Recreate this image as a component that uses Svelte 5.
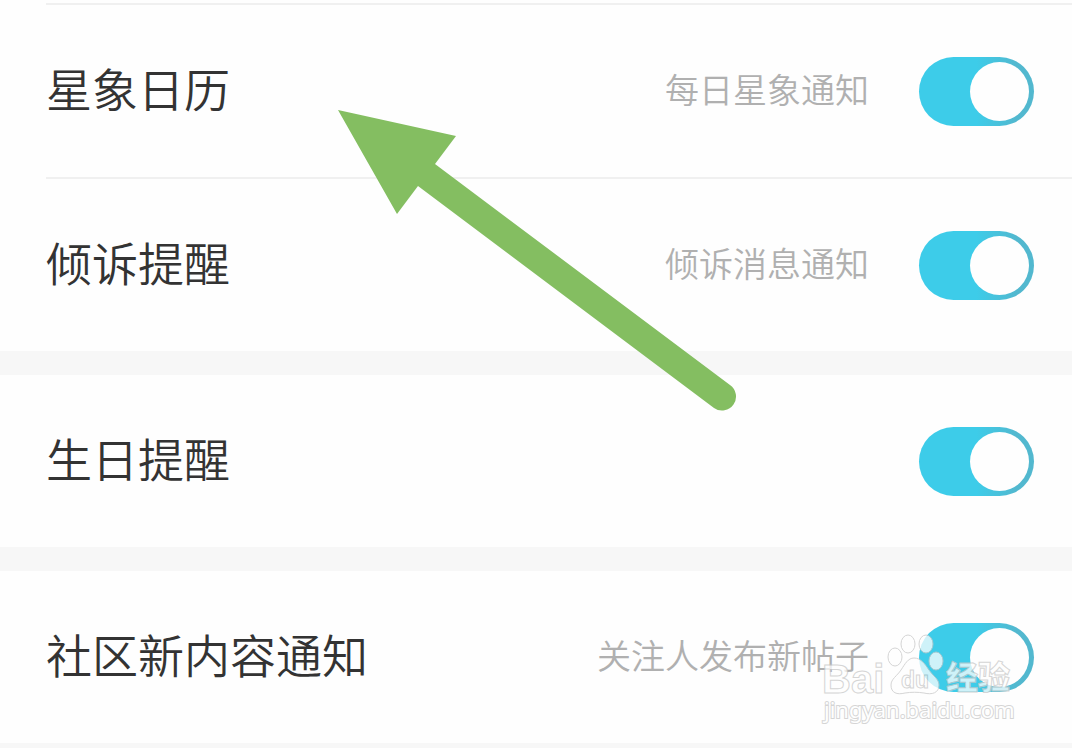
<script lang="ts">
  type Item = { id: string; label: string; note: string; on: boolean };

  let groups = $state<Item[][]>([
    [
      { id: "calendar", label: "星象日历", note: "每日星象通知", on: true },
      { id: "talk", label: "倾诉提醒", note: "倾诉消息通知", on: true },
    ],
    [{ id: "birthday", label: "生日提醒", note: "", on: true }],
    [{ id: "community", label: "社区新内容通知", note: "关注人发布新帖子", on: true }],
  ]);
</script>

<main class="settings">
  {#each groups as group, g}
    <section class="group" class:first={g === 0}>
      {#each group as item (item.id)}
        <div class="row">
          <label class="label" for={item.id}>{item.label}</label>
          {#if item.note}
            <span class="note" id="{item.id}-note">{item.note}</span>
          {/if}
          <input
            class="switch"
            type="checkbox"
            role="switch"
            id={item.id}
            aria-describedby={item.note ? `${item.id}-note` : undefined}
            bind:checked={item.on}
          />
        </div>
      {/each}
    </section>
  {/each}

  <svg class="arrow" width="404" height="304" viewBox="0 0 404 304" aria-hidden="true">
    <path d="M2 2 L120 28 L99 56 L394 277 A14 14 0 0 1 378 300 L82 78 L61 106 Z" />
  </svg>

  <svg class="watermark" width="208" height="96" viewBox="0 0 208 96" aria-hidden="true">
    <g class="paw">
      <ellipse cx="79" cy="24" rx="7" ry="9" />
      <ellipse cx="92" cy="11" rx="7" ry="9" />
      <ellipse cx="110" cy="11" rx="7" ry="9" />
      <ellipse cx="120" cy="28" rx="7" ry="9" />
      <path
        d="M98 25 C105 25 109 31 113 37 C117 43 123 46 123 52 C123 60 116 62 108 60 C102 59 95 59 89 60 C81 62 75 60 75 52 C75 46 81 43 85 37 C89 31 92 25 98 25 Z"
      />
    </g>
    <text class="brand" x="6" y="60">Bai</text>
    <text class="du" x="85" y="55">du</text>
    <text class="cjk" x="130" y="56">经验</text>
    <text class="url" x="8" y="85">jingyan.baidu.com</text>
  </svg>
</main>

<style>
  :global(body) {
    margin: 0;
    background: #f7f7f7;
    overflow: hidden;
  }

  .settings {
    position: relative;
    display: flex;
    flex-direction: column;
    gap: 24px;
    font-family: "Noto Sans CJK SC", sans-serif;
    font-weight: 350;
  }

  .group {
    background: #fefefe;
    padding-left: 46px;
  }

  .first {
    padding-top: 3px;
  }

  .row {
    display: flex;
    align-items: center;
    height: 172px;
    padding-right: 38px;
  }

  .first .row {
    border-top: 2px solid #f0f0f0;
  }

  .label {
    padding-bottom: 8px;
    font-size: 46px;
    line-height: 64px;
    color: #333;
  }

  .note {
    margin-left: auto;
    padding-bottom: 4px;
    font-size: 34px;
    line-height: 48px;
    color: #b0b0b0;
  }

  .switch {
    appearance: none;
    flex: none;
    width: 115px;
    height: 69px;
    margin: 0 0 0 auto;
    padding: 5px;
    box-sizing: border-box;
    border-radius: 35px;
    background: #d8d8d8;
    cursor: pointer;
  }

  .note + .switch {
    margin-left: 50px;
  }

  .switch::before {
    content: "";
    display: block;
    width: 59px;
    height: 59px;
    border-radius: 50%;
    background: #fefefe;
  }

  .switch:checked {
    background: linear-gradient(90deg, #3dcce9 50%, #52b8cf 85%);
  }

  .switch:checked::before {
    margin-left: auto;
  }

  .arrow {
    position: absolute;
    top: 108px;
    left: 336px;
    fill: #84be61;
    pointer-events: none;
  }

  .watermark {
    position: absolute;
    right: 48px;
    bottom: 14px;
    fill: #fff;
    stroke: #c8c8c8;
    stroke-width: 1px;
    opacity: 0.75;
    pointer-events: none;
  }

  .brand {
    font-family: "Liberation Sans", sans-serif;
    font-size: 40px;
    font-weight: 700;
  }

  .du {
    font-family: "Liberation Sans", sans-serif;
    font-size: 23px;
    font-weight: 700;
  }

  .cjk {
    font-size: 32px;
    font-weight: 900;
  }

  .url {
    font-family: "Noto Sans", sans-serif;
    font-size: 22px;
    font-weight: 400;
    stroke-width: 2px;
    paint-order: stroke;
  }
</style>
